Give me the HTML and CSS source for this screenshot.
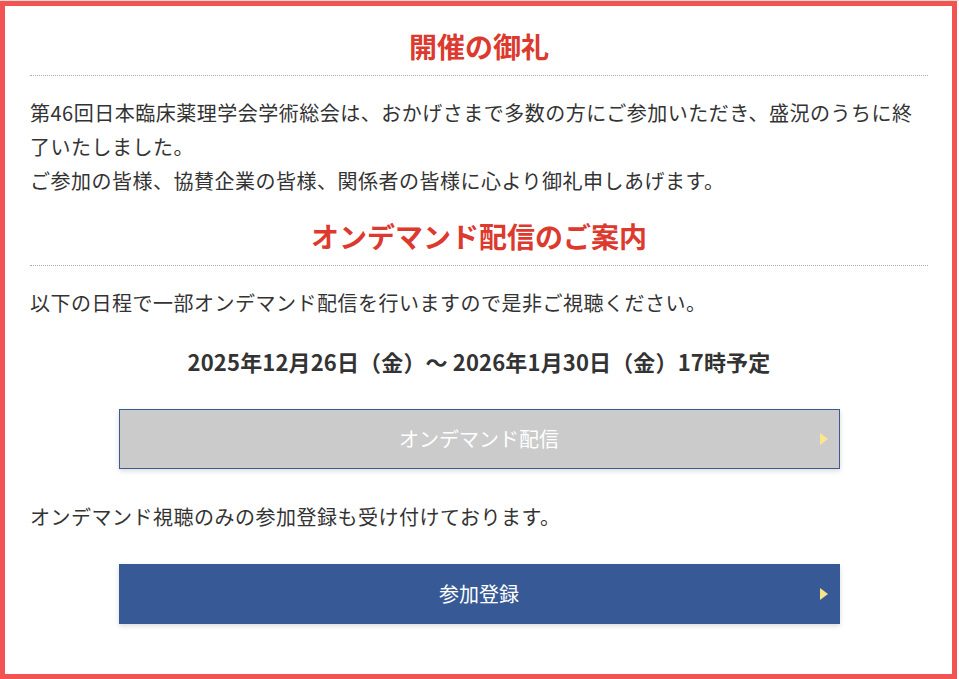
FILE: index.html
```html
<!DOCTYPE html>
<html lang="ja">
<head>
  <meta charset="UTF-8">
  <meta name="viewport" content="width=device-width, initial-scale=1">
  <title>開催の御礼</title>
  <link rel="stylesheet" href="styles.css">
</head>
<body>
  <div class="topstrip"></div>
  <div class="frame">
    <div class="container">
      <h2 class="title">開催の御礼</h2>
      <p class="text">第46回日本臨床薬理学会学術総会は、おかげさまで多数の方にご参加いただき、盛況のうちに終了いたしました。<br>ご参加の皆様、協賛企業の皆様、関係者の皆様に心より御礼申しあげます。</p>

      <h2 class="title second">オンデマンド配信のご案内</h2>
      <p class="text">以下の日程で一部オンデマンド配信を行いますので是非ご視聴ください。</p>
      <p class="date">2025年12月26日（金）～ 2026年1月30日（金）17時予定</p>
      <a class="btn btn-off">オンデマンド配信</a>

      <p class="text note">オンデマンド視聴のみの参加登録も受け付けております。</p>
      <a class="btn btn-main">参加登録</a>
    </div>
  </div>
</body>
</html>
```

FILE: styles.css
```css
body {
  margin: 0;
  font-family: "Noto Sans CJK JP", "Noto Sans", sans-serif;
  color: #333;
  background: #fff;
}

.topstrip {
  height: 1px;
  background: #e8dcd6;
}

.frame {
  box-sizing: border-box;
  width: 957px;
  height: 678px;
  border: 5px solid #f25454;
  background: #fff;
  overflow: hidden;
}

.container {
  padding: 19px 24px 0 25px;
}

.title {
  margin: 0;
  padding-bottom: 8px;
  border-bottom: 1px dotted #aaa;
  text-align: center;
  color: #dc3a2f;
  font-size: 28px;
  font-weight: bold;
  line-height: 42px;
}

.title.second {
  margin-top: 17px;
}

.text {
  margin: 20px 0 0;
  font-size: 20px;
  letter-spacing: 0.5px;
  line-height: 34px;
}

.date {
  margin: 24px 0 0;
  text-align: center;
  font-size: 22px;
  font-weight: bold;
  letter-spacing: 0.15px;
  line-height: 34px;
}

.btn {
  position: relative;
  display: block;
  box-sizing: border-box;
  width: 721px;
  height: 60px;
  margin: 31px auto 0;
  color: #fff;
  font-size: 20px;
  line-height: 58px;
  text-align: center;
  box-shadow: 0 2px 5px rgba(0,0,0,0.15);
}

.btn::after {
  content: "";
  position: absolute;
  right: 11px;
  top: 50%;
  margin-top: -6px;
  border-left: 8px solid #f7e38a;
  border-top: 6px solid transparent;
  border-bottom: 6px solid transparent;
}

.btn-off {
  background: #cbcbcb;
  border: 1px solid #3d5a92;
}

.btn-off::after {
  border-left-color: #fbe68e;
}

.btn-main {
  background: #375a96;
  border: 1px solid #375a96;
  margin-top: 30px;
}

.note {
  margin-top: 31px;
}
```
